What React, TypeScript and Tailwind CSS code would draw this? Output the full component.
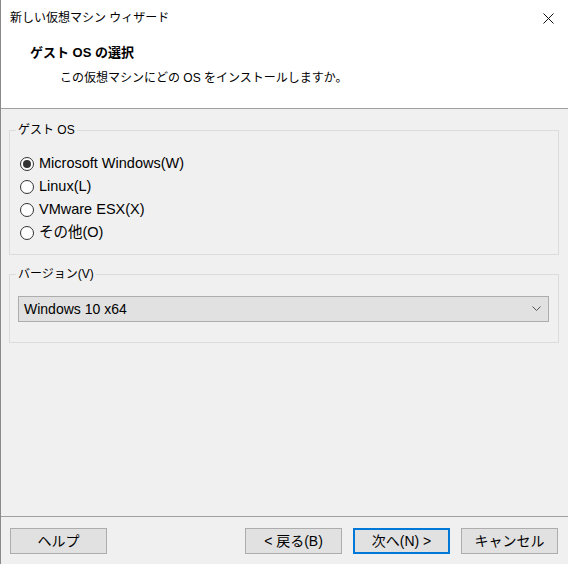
import { useState } from "react";

const font = { fontFamily: '"Liberation Sans", "Noto Sans CJK JP", sans-serif' };

const options = ["Microsoft Windows(W)", "Linux(L)", "VMware ESX(X)", "その他(O)"];

const Radio = ({ label, checked, onClick }: { label: string; checked: boolean; onClick: () => void }) => (
    <div className="flex items-center h-[23px] cursor-default" onClick={onClick}>
        <span className="w-[14px] h-[14px] rounded-full border border-[#333] bg-white flex items-center justify-center ml-[10px]">
            {checked && <span className="w-[8px] h-[8px] rounded-full bg-[#333]" />}
        </span>
        <span className="ml-[5px] text-[14.5px] text-black">{label}</span>
    </div>
);

const Button = ({ children, primary }: { children: React.ReactNode; primary?: boolean }) => (
    <button
        className={
            primary
                ? "w-[97px] h-[26px] bg-[#e1e1e1] border-2 border-[#0078d7] text-[14px] text-black"
                : "w-[97px] h-[26px] bg-[#e1e1e1] border border-[#adadad] text-[14px] text-black"
        }
    >
        {children}
    </button>
);

export default function App() {
    const [os, setOs] = useState(0);

    return (
        <div className="w-[568px] h-[564px] flex flex-col border-l border-[#8a8a8a] bg-[#f0f0f0] overflow-hidden" style={font}>
            {/* title bar + header */}
            <div className="bg-white border-b border-[#a0a0a0] h-[109px] flex flex-col">
                <div className="h-[36px] flex items-center justify-between pl-[9px] pr-[14px]">
                    <span className="text-[12px] text-black">新しい仮想マシン ウィザード</span>
                    <svg width="11" height="11" viewBox="0 0 11 11">
                        <path d="M0.5 0.5 L10.5 10.5 M10.5 0.5 L0.5 10.5" stroke="#111" strokeWidth="1" />
                    </svg>
                </div>
                <div className="pl-[29px] mt-[8px] text-[13px] font-bold text-black h-[18px] leading-[18px]">ゲスト OS の選択</div>
                <div className="pl-[59px] mt-[7px] text-[12px] text-black h-[18px] leading-[18px]">この仮想マシンにどの OS をインストールしますか。</div>
            </div>

            {/* body */}
            <div className="flex-1 flex flex-col pl-[8px] pr-[9px]">
                <fieldset className="mt-[13px] h-[133px] border border-[#dcdcdc]">
                    <legend className="ml-[6px] px-[2px] text-[12px] text-black leading-[16px]">ゲスト OS</legend>
                    <div className="mt-[14px]">
                        {options.map((o, i) => (
                            <Radio key={o} label={o} checked={os === i} onClick={() => setOs(i)} />
                        ))}
                    </div>
                </fieldset>

                <fieldset className="mt-[11px] h-[77px] border border-[#dcdcdc] pl-[8px] pr-[9px]">
                    <legend className="ml-[-2px] px-[2px] text-[12px] text-black leading-[16px]">バージョン(V)</legend>
                    <div className="mt-[14px] h-[26px] bg-[#e1e1e1] border border-[#adadad] flex items-center justify-between pl-[5px] pr-[7px]">
                        <span className="text-[14px] text-black">Windows 10 x64</span>
                        <svg width="9" height="6" viewBox="0 0 9 6">
                            <path d="M0.5 0.5 L4.5 4.5 L8.5 0.5" fill="none" stroke="#555" strokeWidth="1" />
                        </svg>
                    </div>
                </fieldset>
            </div>

            {/* footer */}
            <div className="border-t border-[#a0a0a0] h-[48px] flex items-start pt-[11px] pl-[9px] pr-[10px]">
                <Button>ヘルプ</Button>
                <div className="flex-1" />
                <div className="flex gap-[11px]">
                    <Button>&lt; 戻る(B)</Button>
                    <Button primary>次へ(N) &gt;</Button>
                    <Button>キャンセル</Button>
                </div>
            </div>
        </div>
    );
}
